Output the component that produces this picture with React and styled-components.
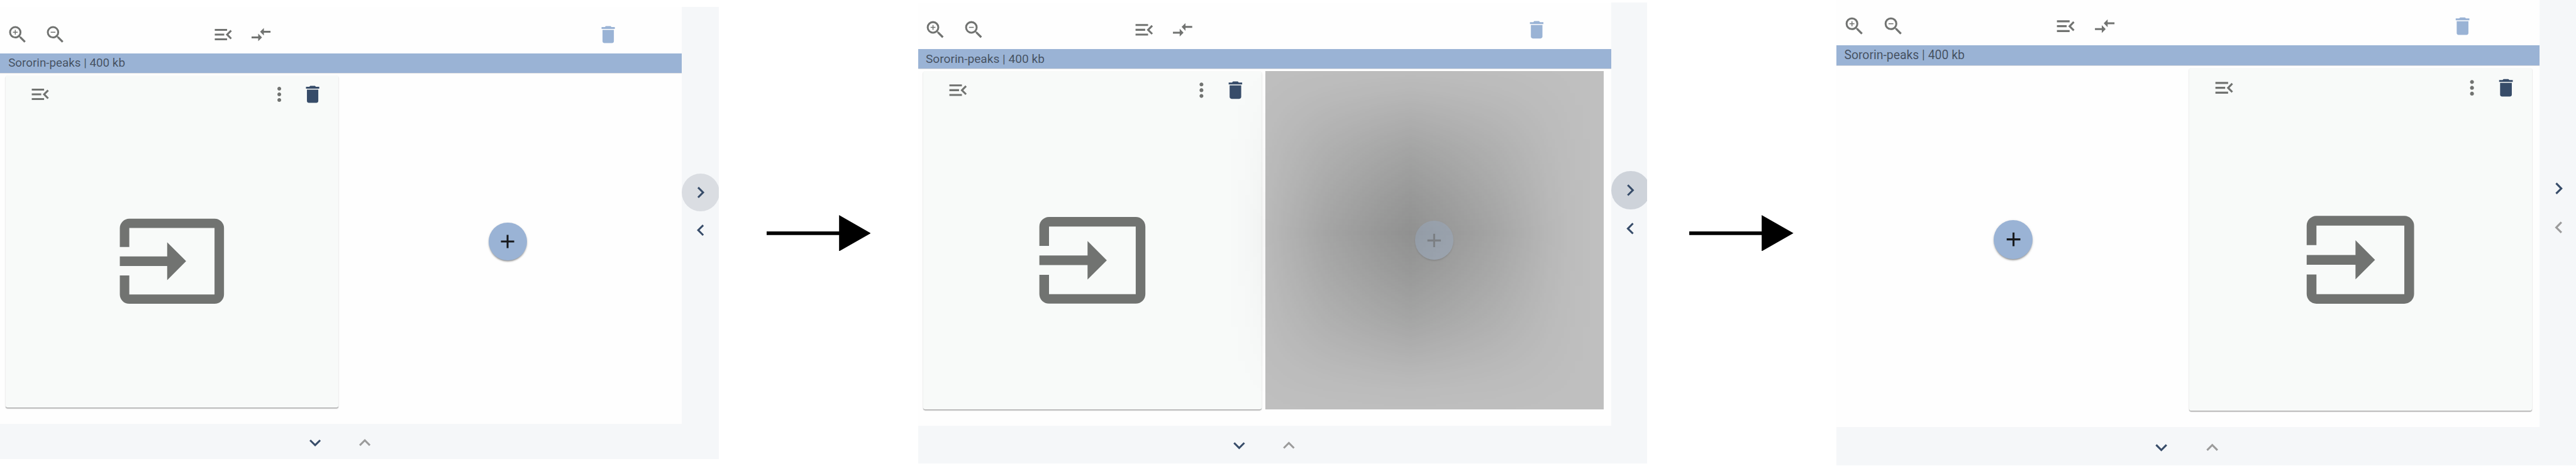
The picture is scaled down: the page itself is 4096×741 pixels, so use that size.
import React from "react";
import styled, { createGlobalStyle, css, ThemeProvider } from "styled-components";
import {
  MdAdd,
  MdChevronLeft,
  MdChevronRight,
  MdCompareArrows,
  MdDelete,
  MdExpandLess,
  MdExpandMore,
  MdInput,
  MdMenuOpen,
  MdMoreVert,
  MdZoomIn,
  MdZoomOut,
} from "react-icons/md";

const K = 4096 / 5902;
const px = (n) => `${(n * K).toFixed(3)}px`;
/* length taken from the frame's metrics */
const m = (key) => ({ theme }) => px(theme[key]);
/* length in the frame's own interface units */
const u = (n) => ({ theme }) => px(theme.unit * n);

const color = {
  bar: "#9ab3d5",
  navy: "#374c69",
  icon: "#717371",
  muted: "#9b9b9b",
  rail: "#f5f7f9",
  card: "#f8faf9",
};

const GlobalStyle = createGlobalStyle`
  *, *::before, *::after { box-sizing: border-box; }
  body { margin: 0; background: #fff; overflow: hidden; font-family: Roboto, "Liberation Sans", sans-serif; }
`;

const Storyboard = styled.main`
  display: flex;
  align-items: flex-start;
  width: 4096px;
  height: 741px;
  overflow: hidden;
`;

const Frame = styled.section`
  display: flex;
  flex: none;
  width: ${m("width")};
  height: ${m("height")};
  margin-top: ${m("top")};
  overflow: hidden;
`;

const Main = styled.div`
  display: flex;
  flex-direction: column;
  flex: none;
  width: ${m("mainWidth")};
  background: #fefefe;
`;

const Toolbar = styled.div`
  display: flex;
  align-items: center;
  flex: none;
  height: ${m("toolbarHeight")};
  padding-top: ${m("toolbarPad")};
  margin-left: ${m("toolbarLeft")};
`;

const ToolGroup = styled.div`
  display: flex;
  margin-left: ${({ $before, theme }) => ($before ? px(theme[$before]) : 0)};
`;

const IconButton = styled.button`
  display: flex;
  align-items: center;
  justify-content: center;
  flex: none;
  width: ${({ $w = 39.7, theme }) => px(theme.unit * $w)};
  height: ${u(40)};
  padding: 0;
  border: 0;
  border-radius: 50%;
  background: ${({ $fill = "transparent" }) => $fill};
  color: ${({ $color = color.icon }) => $color};

  svg {
    flex: none;
    width: ${u(24)};
    height: ${u(24)};
  }
`;

const TitleBar = styled.div`
  display: flex;
  align-items: center;
  flex: none;
  height: ${m("barHeight")};
  padding: 0 0 ${px(1)} ${m("titleLeft")};
  border-bottom: ${px(2)} solid #dfe0e2;
  background: ${color.bar};
  background-clip: padding-box;
  color: rgba(0, 0, 0, 0.56);
  font-size: ${u(12.5)};
  line-height: 1;
  white-space: nowrap;
`;

const Workspace = styled.div`
  display: flex;
  flex: 1;
  gap: ${px(9)};
  padding-top: ${m("cardTop")};
  padding-left: ${m("cardLeft")};
`;

const Card = styled.article`
  display: flex;
  flex-direction: column;
  flex: none;
  width: ${m("cardWidth")};
  height: ${m("cardHeight")};
  border-radius: ${u(2)};
  background: ${color.card};
  box-shadow: 0 ${px(2)} 0 rgba(0, 0, 0, 0.28), 0 ${px(2)} 0 ${px(1.8)} rgba(0, 0, 0, 0.06);
`;

const CardHeader = styled.header`
  display: flex;
  align-items: center;
  justify-content: space-between;
  flex: none;
  height: ${u(40)};
  padding: 0 ${u(9.3)} 0 ${u(16.5)};
`;

const CardActions = styled.div`
  display: flex;
`;

const CardBody = styled.div`
  display: flex;
  align-items: center;
  justify-content: center;
  flex: 1;
  padding-top: ${u(2)};
  color: ${color.icon};

  svg {
    width: ${u(120)};
    height: ${u(120)};
  }
`;

const Slot = styled.div`
  position: relative;
  display: flex;
  align-items: center;
  justify-content: center;
  flex: none;
  width: ${m("slotWidth")};
  height: ${m("cardHeight")};
  ${({ $active }) => $active && css`background: #bfbfbf;`}
`;

const tent = (dir, rgb, strength) =>
  `linear-gradient(${dir}, ${[
    [0, 0],
    [6, 0.05],
    [12, 0.17],
    [27, 0.57],
    [40.5, 0.85],
    [50, 1],
    [59.5, 0.85],
    [73, 0.57],
    [88, 0.17],
    [94, 0.05],
    [100, 0],
  ]
    .map(([at, a]) => `rgba(${rgb}, ${(a * strength).toFixed(4)}) ${at}%`)
    .join(", ")})`;

/* Press ripple spreading over the slot and slightly past its left edge */
const Ripple = styled.span`
  position: absolute;
  left: ${px(-88)};
  top: 0;
  width: ${px(840)};
  height: 100%;
  overflow: hidden;
  pointer-events: none;

  &::before {
    content: "";
    position: absolute;
    left: 0;
    top: ${px(-49)};
    width: 100%;
    height: ${px(840)};
    background: ${tent("to right", "0, 2, 0", 0.242)};
    mask-image: ${tent("to bottom", "0, 0, 0", 1)};
  }
`;

const AddButton = styled.button`
  position: relative;
  display: flex;
  align-items: center;
  justify-content: center;
  width: ${u(40)};
  height: ${u(40)};
  padding: 0;
  border: 0;
  border-radius: 50%;
  background: ${color.bar};
  color: #17191c;
  opacity: ${({ $faded }) => ($faded ? 0.32 : 1)};
  box-shadow: 0 ${u(1.6)} ${u(1.6)} ${u(-0.6)} rgba(0, 0, 0, 0.36), 0 ${u(0.8)} ${u(2.6)} rgba(0, 0, 0, 0.14);

  svg {
    width: ${u(24)};
    height: ${u(24)};
    opacity: ${({ $faded }) => ($faded ? 0.65 : 1)};
  }
`;

const Footer = styled.footer`
  display: flex;
  align-items: center;
  justify-content: center;
  gap: ${u(12)};
  flex: none;
  height: ${m("footerHeight")};
  padding-top: ${m("footerPad")};
  padding-right: ${px(4)};
  background: ${color.rail};
`;

const Rail = styled.aside`
  display: flex;
  flex-direction: column;
  flex: 1;
  padding-top: ${m("railPad")};
  overflow: hidden;
  background: ${color.rail};
`;

const Connector = styled.div`
  display: flex;
  align-items: center;
  flex: none;
  width: ${({ $width }) => px($width)};
  height: 741px;
  padding-left: ${({ $left }) => px($left)};

  svg {
    width: ${px(238.8)};
    height: ${px(83)};
  }
`;

const frames = [
  {
    unit: 2.17, width: 1647, mainWidth: 1562, top: 16, height: 1035.5,
    toolbarHeight: 107, toolbarPad: 19, toolbarLeft: -2, midGap: 298.5, endGap: 709.5,
    barHeight: 45, titleLeft: 19, cardTop: 4.7, cardLeft: 13, cardWidth: 762,
    cardHeight: 761.5, slotWidth: 759, footerHeight: 80.5, footerPad: 7, railPad: 381,
    pressed: "#dadde2", previous: color.navy, order: ["card", "slot"],
  },
  {
    unit: 2.208, width: 1670, mainWidth: 1588, top: 6, height: 1056,
    toolbarHeight: 106, toolbarPad: 18, toolbarLeft: -4.5, midGap: 303.5, endGap: 723,
    barHeight: 47, titleLeft: 17, cardTop: 4, cardLeft: 11, cardWidth: 775,
    cardHeight: 775, slotWidth: 775, footerHeight: 86, footerPad: 3, railPad: 385.3,
    pressed: "#ced3da", previous: color.navy, order: ["card", "slot"], ripple: true,
  },
  {
    unit: 2.237, width: 1695.1, mainWidth: 1611.3, top: 0.7, height: 1066.3,
    toolbarHeight: 103.3, toolbarPad: 16, toolbarLeft: -2, midGap: 306.5, endGap: 731.5,
    barHeight: 47, titleLeft: 18.5, cardTop: 5.3, cardLeft: 12, cardWidth: 786.5,
    cardHeight: 784.7, slotWidth: 787.5, footerHeight: 88, footerPad: 3.5, railPad: 386.3,
    previous: color.muted, order: ["slot", "card"],
  },
];

const links = [
  { width: 457, left: 109 },
  { width: 432.9, left: 96.8 },
];

function InputCard() {
  return (
    <Card>
      <CardHeader>
        <IconButton><MdMenuOpen /></IconButton>
        <CardActions>
          <IconButton $w={35.1}><MdMoreVert /></IconButton>
          <IconButton $w={35.1} $color={color.navy}><MdDelete /></IconButton>
        </CardActions>
      </CardHeader>
      <CardBody><MdInput /></CardBody>
    </Card>
  );
}

function EmptySlot({ ripple }) {
  return (
    <Slot $active={ripple}>
      {ripple && <Ripple />}
      <AddButton $faded={ripple}><MdAdd /></AddButton>
    </Slot>
  );
}

function WorkspaceFrame({ frame }) {
  return (
    <ThemeProvider theme={frame}>
      <Frame>
        <Main>
          <Toolbar>
            <ToolGroup>
              <IconButton><MdZoomIn /></IconButton>
              <IconButton><MdZoomOut /></IconButton>
            </ToolGroup>
            <ToolGroup $before="midGap">
              <IconButton><MdMenuOpen /></IconButton>
              <IconButton><MdCompareArrows /></IconButton>
            </ToolGroup>
            <ToolGroup $before="endGap">
              <IconButton $color={color.bar}><MdDelete /></IconButton>
            </ToolGroup>
          </Toolbar>
          <TitleBar>Sororin-peaks | 400 kb</TitleBar>
          <Workspace>
            {frame.order.map((part) =>
              part === "card" ? <InputCard key={part} /> : <EmptySlot key={part} ripple={frame.ripple} />
            )}
          </Workspace>
          <Footer>
            <IconButton $w={40} $color={color.navy}><MdExpandMore /></IconButton>
            <IconButton $w={40} $color={color.muted}><MdExpandLess /></IconButton>
          </Footer>
        </Main>
        <Rail>
          <IconButton $w={40} $color={color.navy} $fill={frame.pressed}><MdChevronRight /></IconButton>
          <IconButton $w={40} $color={frame.previous}><MdChevronLeft /></IconButton>
        </Rail>
      </Frame>
    </ThemeProvider>
  );
}

function Arrow({ width, left }) {
  return (
    <Connector $width={width} $left={left}>
      <svg viewBox="0 0 238.8 83" aria-hidden="true">
        <path d="M0 37.3H166V0L238.8 41.5 166 83V45.7H0z" fill="#000" />
      </svg>
    </Connector>
  );
}

export default function App() {
  return (
    <>
      <GlobalStyle />
      <Storyboard>
        {frames.map((frame, i) => (
          <React.Fragment key={frame.width}>
            <WorkspaceFrame frame={frame} />
            {links[i] && <Arrow {...links[i]} />}
          </React.Fragment>
        ))}
      </Storyboard>
    </>
  );
}
